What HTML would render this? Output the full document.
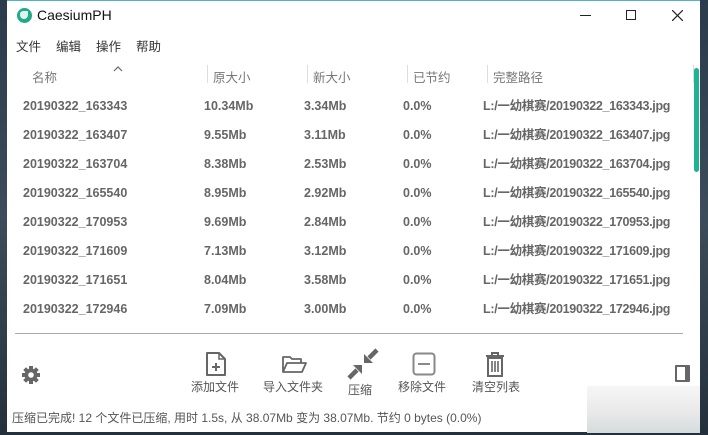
<!DOCTYPE html>
<html><head><meta charset="utf-8"><style>
*{margin:0;padding:0;box-sizing:border-box}
body{width:708px;height:435px;overflow:hidden;background:linear-gradient(180deg,#2b3b4c,#3d4c5a 50%,#24303c);font-family:"Liberation Sans","Noto Sans CJK SC",sans-serif;position:relative}
.win{position:absolute;left:7px;top:0;width:693px;height:432px;background:#fff;border-top:1px solid #4fb3c9}
.t{position:absolute;white-space:nowrap}
.hdr{color:#777;font-size:12.5px;top:66px}
.menu{font-size:12.5px;color:#333;top:35px}
.sep{position:absolute;top:64px;width:1px;height:18px;background:#ddd}
.row{position:absolute;left:0;width:680px;height:20px;font-size:12.5px;font-weight:bold;color:#666;line-height:20px}
.row span{position:absolute;top:0;line-height:20px;white-space:nowrap}
.row span:last-child{letter-spacing:-0.3px}
.lbl{font-size:12px;color:#555;top:377px}
</style></head><body>
<div class="win">
<div style="position:absolute;left:10px;top:7px;width:15px;height:15px;border-radius:50%;background:#20a98a"></div>
<div style="position:absolute;left:13px;top:10px;width:8px;height:8px;border-radius:40% 10% 50% 50%;background:#dff3ee"></div>
<div class="t" style="left:30px;top:6px;font-size:14px;color:#111">CaesiumPH</div>
<div style="position:absolute;left:573px;top:14px;width:11px;height:1px;background:#222"></div>
<div style="position:absolute;left:619px;top:9px;width:10px;height:10px;border:1px solid #222"></div>
<svg style="position:absolute;left:665px;top:9px" width="11" height="11"><path d="M0 0L11 11M11 0L0 11" stroke="#222" stroke-width="1.2"/></svg>
<div class="t menu" style="left:9px">文件</div>
<div class="t menu" style="left:49px">编辑</div>
<div class="t menu" style="left:89px">操作</div>
<div class="t menu" style="left:129px">帮助</div>
<div class="t hdr" style="left:25px">名称</div>
<svg style="position:absolute;left:106px;top:65px" width="10" height="6"><path d="M1 5L5 1L9 5" stroke="#666" fill="none" stroke-width="1.2"/></svg>
<div class="sep" style="left:200px"></div><div class="t hdr" style="left:206px">原大小</div>
<div class="sep" style="left:300px"></div><div class="t hdr" style="left:306px">新大小</div>
<div class="sep" style="left:400px"></div><div class="t hdr" style="left:406px">已节约</div>
<div class="sep" style="left:480px"></div><div class="t hdr" style="left:486px">完整路径</div>
<div class="sep" style="left:686px"></div>
<div style="position:absolute;left:687px;top:67px;width:5px;height:104px;border-radius:3px;background:#1eb394"></div>

<div class="row" style="top:95px"><span style="left:16px">20190322_163343</span><span style="left:197px">10.34Mb</span><span style="left:297px">3.34Mb</span><span style="left:396px">0.0%</span><span style="left:476px">L:/一幼棋赛/20190322_163343.jpg</span></div>
<div class="row" style="top:124px"><span style="left:16px">20190322_163407</span><span style="left:197px">9.55Mb</span><span style="left:297px">3.11Mb</span><span style="left:396px">0.0%</span><span style="left:476px">L:/一幼棋赛/20190322_163407.jpg</span></div>
<div class="row" style="top:153px"><span style="left:16px">20190322_163704</span><span style="left:197px">8.38Mb</span><span style="left:297px">2.53Mb</span><span style="left:396px">0.0%</span><span style="left:476px">L:/一幼棋赛/20190322_163704.jpg</span></div>
<div class="row" style="top:182px"><span style="left:16px">20190322_165540</span><span style="left:197px">8.95Mb</span><span style="left:297px">2.92Mb</span><span style="left:396px">0.0%</span><span style="left:476px">L:/一幼棋赛/20190322_165540.jpg</span></div>
<div class="row" style="top:211px"><span style="left:16px">20190322_170953</span><span style="left:197px">9.69Mb</span><span style="left:297px">2.84Mb</span><span style="left:396px">0.0%</span><span style="left:476px">L:/一幼棋赛/20190322_170953.jpg</span></div>
<div class="row" style="top:240px"><span style="left:16px">20190322_171609</span><span style="left:197px">7.13Mb</span><span style="left:297px">3.12Mb</span><span style="left:396px">0.0%</span><span style="left:476px">L:/一幼棋赛/20190322_171609.jpg</span></div>
<div class="row" style="top:269px"><span style="left:16px">20190322_171651</span><span style="left:197px">8.04Mb</span><span style="left:297px">3.58Mb</span><span style="left:396px">0.0%</span><span style="left:476px">L:/一幼棋赛/20190322_171651.jpg</span></div>
<div class="row" style="top:298px"><span style="left:16px">20190322_172946</span><span style="left:197px">7.09Mb</span><span style="left:297px">3.00Mb</span><span style="left:396px">0.0%</span><span style="left:476px">L:/一幼棋赛/20190322_172946.jpg</span></div>
<div style="position:absolute;left:8px;top:332px;width:668px;height:1px;background:#aaa"></div>

<svg style="position:absolute;left:14px;top:364px" width="20" height="20" viewBox="0 0 20 20"><g fill="#666"><circle cx="10" cy="10" r="6.5"/><rect x="8" y="1" width="4" height="18"/><rect x="1" y="8" width="18" height="4"/><rect x="8" y="1" width="4" height="18" transform="rotate(45 10 10)"/><rect x="8" y="1" width="4" height="18" transform="rotate(-45 10 10)"/></g><circle cx="10" cy="10" r="2.8" fill="#fff"/></svg>

<svg style="position:absolute;left:198px;top:350px" width="22" height="26"><path d="M2 2H14L20 8V24H2Z" fill="none" stroke="#666" stroke-width="2" stroke-linejoin="round"/><path d="M14 2V8H20" fill="none" stroke="#666" stroke-width="1.5"/><path d="M11 12V20M7 16H15" stroke="#666" stroke-width="2"/></svg>
<svg style="position:absolute;left:274px;top:354px" width="26" height="20"><path d="M2 17V2H9L11 4H20V8M2 17L6 8H25L21 17Z" fill="none" stroke="#666" stroke-width="1.8" stroke-linejoin="round"/></svg>
<svg style="position:absolute;left:340px;top:347px" width="32" height="32"><path d="M30 2L22 10M2 30L10 22" stroke="#666" stroke-width="4.5"/><path d="M17 15V6L26 15Z M15 17V26L6 17Z" fill="#666"/></svg>
<svg style="position:absolute;left:405px;top:351px" width="24" height="24"><rect x="1.5" y="1.5" width="21" height="21" rx="3" fill="none" stroke="#888" stroke-width="2"/><path d="M6 12H18" stroke="#888" stroke-width="2"/></svg>
<svg style="position:absolute;left:477px;top:350px" width="22" height="27"><path d="M2 5H20M8 5V2H14V5" fill="none" stroke="#666" stroke-width="2"/><path d="M4 7H18V25H4Z" fill="none" stroke="#666" stroke-width="2"/><path d="M8 10V21M11 10V21M14 10V21" stroke="#666" stroke-width="1.6"/></svg>
<div class="t lbl" style="left:184px">添加文件</div>
<div class="t lbl" style="left:256px">导入文件夹</div>
<div class="t lbl" style="left:341px;top:380px">压缩</div>
<div class="t lbl" style="left:391px">移除文件</div>
<div class="t lbl" style="left:465px">清空列表</div>
<div style="position:absolute;left:668px;top:364px;width:15px;height:17px;border:2px solid #666;border-right-width:5px;border-radius:1px"></div>
<div class="t" style="left:5px;top:408px;font-size:12px;color:#555">压缩已完成! 12 个文件已压缩, 用时 1.5s, 从 38.07Mb 变为 38.07Mb. 节约 0 bytes (0.0%)</div>
<div style="position:absolute;left:580px;top:385px;width:113px;height:47px;background:linear-gradient(180deg,#f6f6f6,#e8e8e8 60%,#d4dcdc)"></div>
</div>
</body></html>
